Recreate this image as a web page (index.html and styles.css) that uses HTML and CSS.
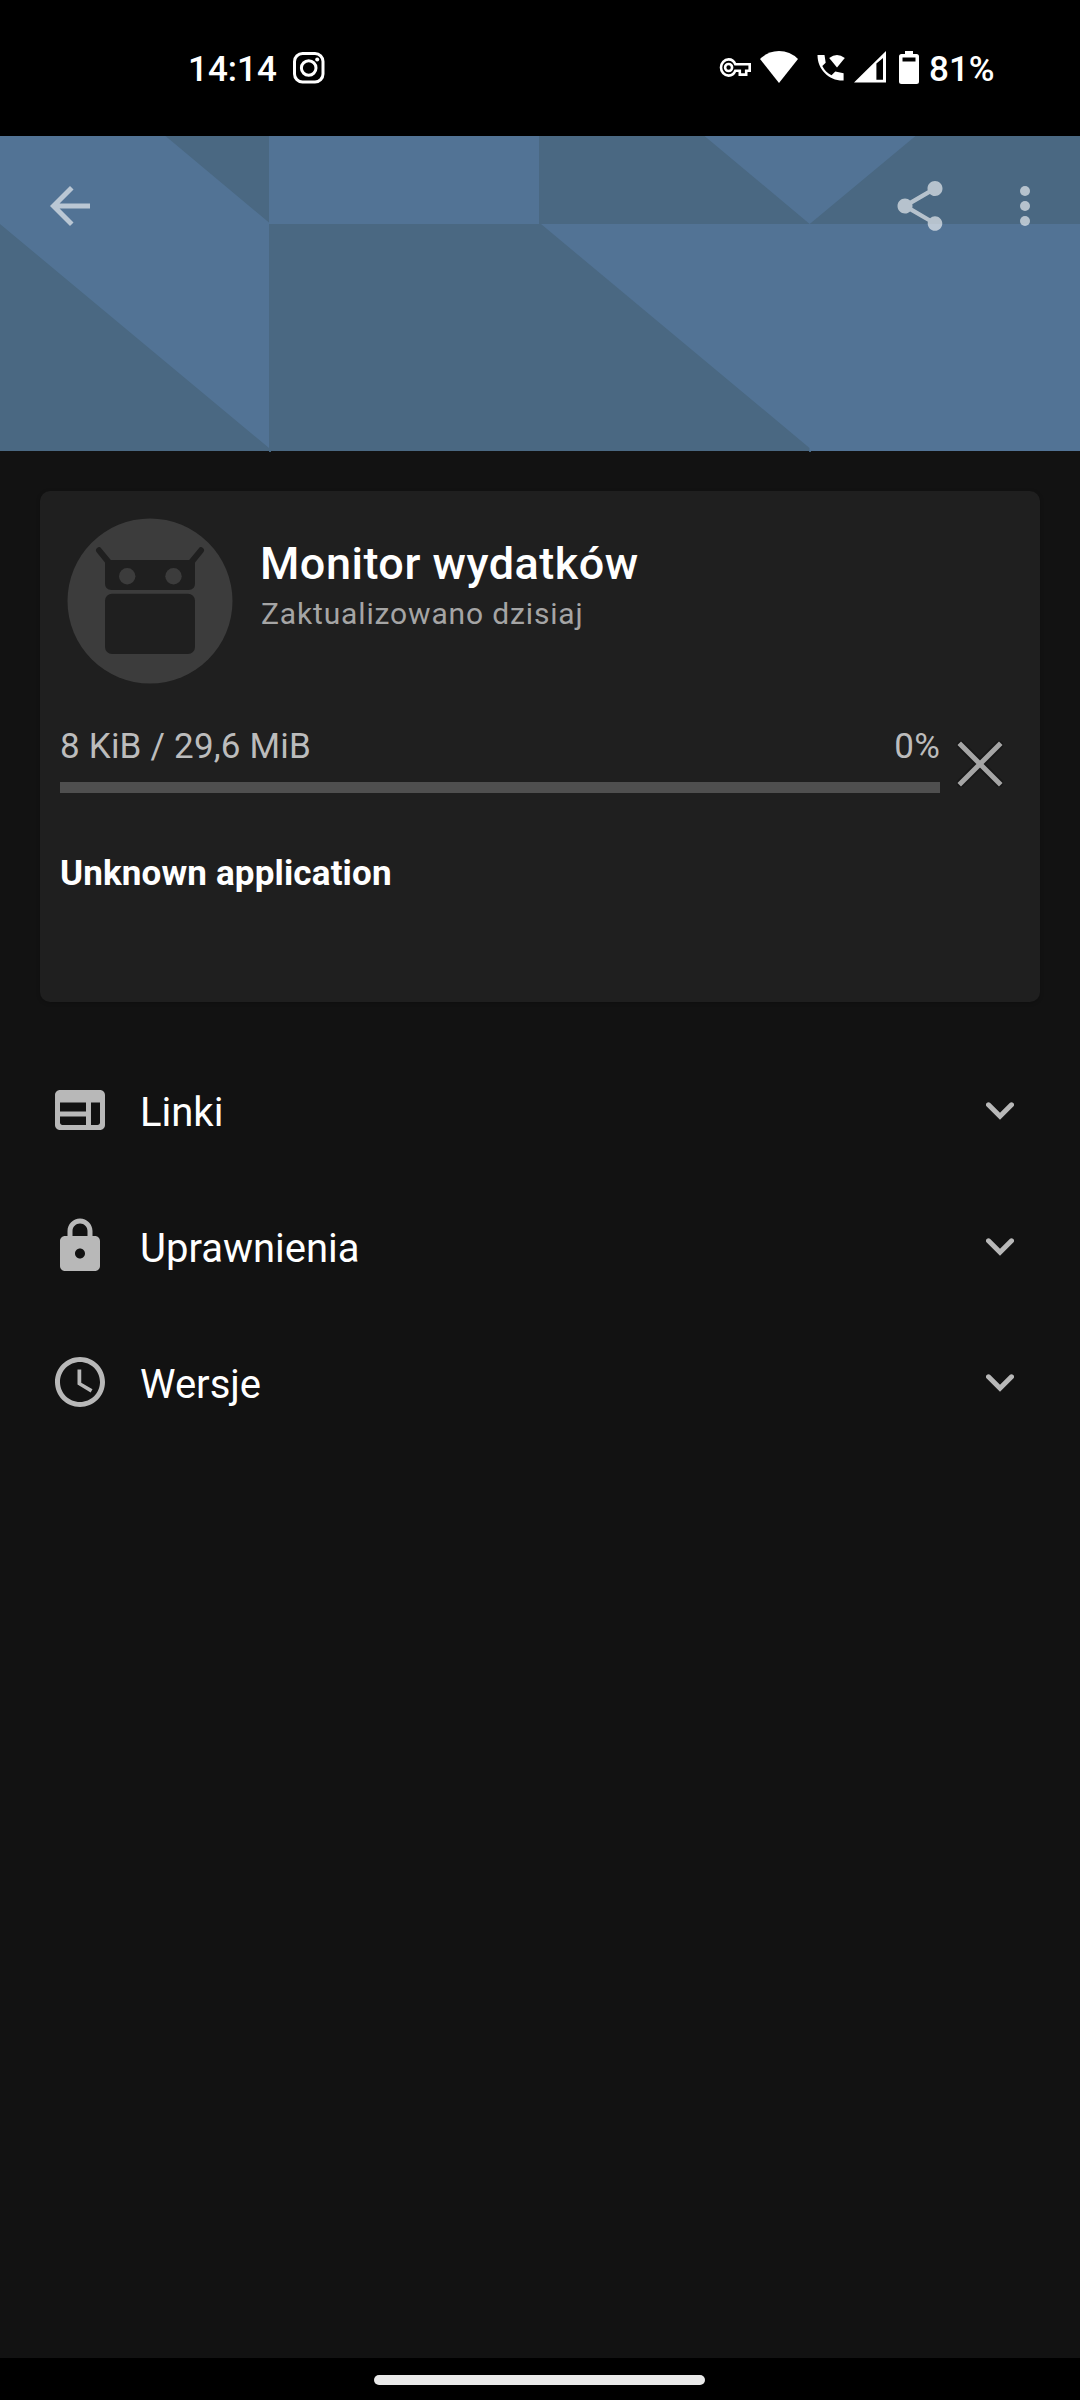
FILE: index.html
```html
<!DOCTYPE html>
<html lang="pl">
<head>
<meta charset="utf-8">
<title>Monitor wydatków</title>
<link rel="stylesheet" href="styles.css">
</head>
<body>
<div class="screen">
  <div class="status">
    <span class="clock">14:14</span>
    <svg class="instagram" width="34" height="34" viewBox="0 0 34 34" fill="none" stroke="#fff" stroke-width="3"><rect x="2.5" y="2.5" width="28.5" height="28.5" rx="8"/><circle cx="16.7" cy="17" r="7.3"/><circle cx="25.2" cy="8.6" r="2" fill="#fff" stroke="none"/></svg>
    <svg class="key" width="33" height="22" viewBox="0 0 33 22" fill="none" stroke="#fff" stroke-width="2.6"><path d="M16.3 7.2H30.7V13.8H27.2V17.6H20.8V13.8H16.3C15 17 12.5 18.600 9.600 18.600C5.300 18.600 2 14.800 2 10.500S5.300 2.400 9.600 2.400C12.500 2.400 15 4 16.300 7.200Z"/><circle cx="9.600" cy="10.500" r="3.500"/></svg>
    <svg class="wifi" width="38" height="32" viewBox="0 0 38 32" fill="#fff"><path d="M0 8Q8 0 19 0T38 8L19 32Z"/></svg>
    <svg class="call" width="28" height="28" viewBox="0 0 28 28" fill="#fff"><path d="M.5 1H7.500L8.700 8.800L5.300 12C7.500 16.500 10.300 19.200 14.500 21.200L18.300 17.600L26.600 19.200V26.500C12 27 .5 15.500 .5 1Z"/><path d="M12.200 4Q20 -2 27.800 4L20 13.500Z"/></svg>
    <svg class="signal" width="32" height="32" viewBox="0 0 32 32"><path fill="#fff" fill-rule="evenodd" d="M0 31.500L32 0V31.500ZM22.400 12.500V28.800H29V7Z"/></svg>
    <svg class="battery" width="20" height="33" viewBox="0 0 20 33"><path fill="#fff" fill-rule="evenodd" d="M6 0H14V3H17.500Q20 3 20 5.500V30.500Q20 33 17.500 33H2.500Q0 33 0 30.500V5.500Q0 3 2.500 3H6ZM3.500 6.500V10.500H16.500V6.500Z"/></svg>
    <span class="level">81%</span>
  </div>

  <header class="banner">
    <svg class="pattern" width="1080" height="316" viewBox="0 0 1080 316"><path fill="#4a6882" d="M0 0H1080V315H0Z"/><path fill="#527395" d="M0 0H165.500L269 86.500V312L0 88ZM269 0H539V88H269ZM704.500 0H915.500L809.700 88ZM541 88H1080V315H809.500V312Z"/><path fill="#45647d" d="M269 315H271V316H269ZM809 315H811V316H809Z"/></svg>
    <svg class="tool" viewBox="0 0 24 24"><path d="M20 11H7.830l5.590-5.590L12 4l-8 8 8 8 1.410-1.410L7.830 13H20v-2z"/></svg>
    <div class="tools">
      <svg class="tool" viewBox="0 0 24 24"><path d="M18 16.080c-.760 0-1.440.3-1.960.770L8.910 12.700c.050-.230.090-.460.090-.7s-.040-.470-.090-.7l7.050-4.110c.540.5 1.250.810 2.040.810 1.660 0 3-1.340 3-3s-1.340-3-3-3-3 1.340-3 3c0 .240.040.470.090.7L8.040 9.810C7.500 9.310 6.790 9 6 9c-1.660 0-3 1.340-3 3s1.340 3 3 3c.790 0 1.500-.310 2.040-.810l7.120 4.160c-.050.210-.080.430-.080.650 0 1.610 1.310 2.920 2.920 2.920s2.920-1.310 2.920-2.920-1.310-2.920-2.920-2.920z"/></svg>
      <svg class="tool" viewBox="0 0 24 24"><circle cx="12" cy="6" r="2"/><circle cx="12" cy="12" r="2"/><circle cx="12" cy="18" r="2"/></svg>
    </div>
  </header>

  <main>
    <section class="card">
      <div class="app">
        <svg class="logo" width="166" height="166" viewBox="67 517.500 166 166"><circle cx="150" cy="600.500" r="82.500" fill="#3c3c3c"/><g fill="#1f1f1f"><path d="M99 549.800L108.500 561.500M201 549.800L191.500 561.500" stroke="#1f1f1f" stroke-width="6" stroke-linecap="round"/><path d="M105 559.500H195V583Q195 589.500 188.500 589.500H111.500Q105 589.500 105 583Z"/><rect x="105" y="593.300" width="90" height="60.300" rx="7"/></g><circle cx="127.200" cy="575.700" r="8.200" fill="#3c3c3c"/><circle cx="173.500" cy="575.700" r="8.200" fill="#3c3c3c"/></svg>
        <div class="names">
          <h1>Monitor wydatków</h1>
          <p class="updated">Zaktualizowano dzisiaj</p>
        </div>
      </div>
      <div class="download">
        <div class="progress">
          <div class="figures"><span class="size">8 KiB / 29,6 MiB</span><span>0%</span></div>
          <div class="bar"></div>
        </div>
        <svg class="cancel" width="60" height="60" viewBox="0 0 60 60" fill="none"><path d="M11 11L49 49M49 11L11 49" stroke="#171717" stroke-width="8.500" stroke-linecap="round"/><path d="M11 11L49 49M49 11L11 49" stroke="#a5a5a5" stroke-width="5" stroke-linecap="square"/></svg>
      </div>
      <p class="summary">Unknown application</p>
    </section>

    <div class="row">
      <svg class="icon" viewBox="0 0 24 24"><path d="M20 4H4c-1.100 0-1.990.9-1.990 2L2 18c0 1.100.9 2 2 2h16c1.100 0 2-.9 2-2V6c0-1.100-.9-2-2-2zM14.400 18H5c-.550 0-1-.450-1-1v-2.400h10.400V18zm0-5.400H4V9h10.400v3.600zM19 18h-2.600V9H20v8c0 .550-.450 1-1 1z"/></svg>
      <span class="label">Linki</span>
      <svg class="chevron" viewBox="0 0 28 18"><path d="M2.500 2.800L14 14.300L25.500 2.800"/></svg>
    </div>
    <div class="row">
      <svg class="icon" viewBox="0 0 24 24"><path d="M18 8h-1V6c0-2.760-2.240-5-5-5S7 3.240 7 6v2H6c-1.100 0-2 .9-2 2v10c0 1.100.9 2 2 2h12c1.100 0 2-.9 2-2V10c0-1.100-.9-2-2-2zm-6 9c-1.100 0-2-.9-2-2s.9-2 2-2 2 .9 2 2-.9 2-2 2zM9 8V6c0-1.660 1.340-3 3-3s3 1.340 3 3v2H9z"/></svg>
      <span class="label">Uprawnienia</span>
      <svg class="chevron" viewBox="0 0 28 18"><path d="M2.500 2.800L14 14.300L25.500 2.800"/></svg>
    </div>
    <div class="row">
      <svg class="icon" viewBox="0 0 24 24"><path d="M11.990 2C6.470 2 2 6.480 2 12s4.470 10 9.990 10C17.520 22 22 17.520 22 12S17.520 2 11.990 2zM12 20c-4.420 0-8-3.580-8-8s3.580-8 8-8 8 3.580 8 8-3.580 8-8 8zM12.500 7H11v6l5.250 3.150.750-1.230-4.500-2.670z"/></svg>
      <span class="label">Wersje</span>
      <svg class="chevron" viewBox="0 0 28 18"><path d="M2.500 2.800L14 14.300L25.500 2.800"/></svg>
    </div>
  </main>

  <nav class="navbar"><div class="pill"></div></nav>
</div>
</body>
</html>
```
FILE: styles.css
```css
* { box-sizing: border-box; margin: 0; padding: 0; }
body { background: #121212; font-family: Roboto, "Liberation Sans", sans-serif; color: #fff; }
svg { display: block; flex: none; }
.screen { width: 1080px; height: 2400px; display: flex; flex-direction: column; overflow: hidden; }

.status { height: 136px; background: #000; display: flex; align-items: flex-start; padding: 51px 0 0 188px; font-size: 35px; line-height: 38px; font-weight: 500; }
.clock { width: 104px; white-space: nowrap; }
.instagram { margin-right: 393px; }
.key { margin: 6px 8px 0 0; }
.wifi { margin-right: 19px; }
.call { margin: 3px 9px 0 0; }
.signal { margin-right: 13px; }
.battery { margin-right: 10px; }

.banner { position: relative; height: 315px; display: flex; justify-content: space-between; padding: 40px 25px 0 40px; }
.pattern { position: absolute; left: 0; top: 0; }
.tools { display: flex; gap: 45px; }
.tool { position: relative; width: 60px; height: 60px; fill: #fff; opacity: .6; }

main { flex: 1; padding: 40px 40px 0; }
.card { height: 511px; border-radius: 10px; background: #1f1f1f; box-shadow: 0 1px 4px rgba(0, 0, 0, .2); padding: 26.500px 20px 0; margin-bottom: 40px; }
.app { display: flex; gap: 27px; padding-left: 7px; height: 200px; }
.names { padding-top: 19px; }
h1 { font-size: 45px; line-height: 53px; font-weight: 500; letter-spacing: .5px; }
.updated { margin-top: 6px; padding-left: 1px; font-size: 30px; line-height: 35px; letter-spacing: .85px; color: #a5a5a5; }
.download { display: flex; gap: 10px; padding-top: 8px; }
.progress { width: 880px; }
.figures { display: flex; justify-content: space-between; font-size: 35px; line-height: 41px; letter-spacing: .2px; color: #bcbcbc; }
.bar { height: 11px; margin-top: 15px; background: #4f4f4f; }
.cancel { margin-top: 8px; }
.summary { font-size: 35px; line-height: 41px; font-weight: 700; letter-spacing: .15px; margin-top: 59px; }

.row { height: 136px; display: flex; align-items: center; padding: 0 26px 0 10px; }
.icon { width: 60px; height: 60px; fill: #b8b8b8; }
.label { flex: 1; margin-left: 30px; padding-top: 6px; font-size: 40px; line-height: 48px; }
.chevron { width: 28px; height: 18px; margin-top: 2px; fill: none; stroke: #b8b8b8; stroke-width: 5; stroke-linecap: round; }

.navbar { height: 42px; background: #000; padding: 17px 0 0 374px; }
.pill { width: 331px; height: 10px; border-radius: 5px; background: #eaeaea; }
```
